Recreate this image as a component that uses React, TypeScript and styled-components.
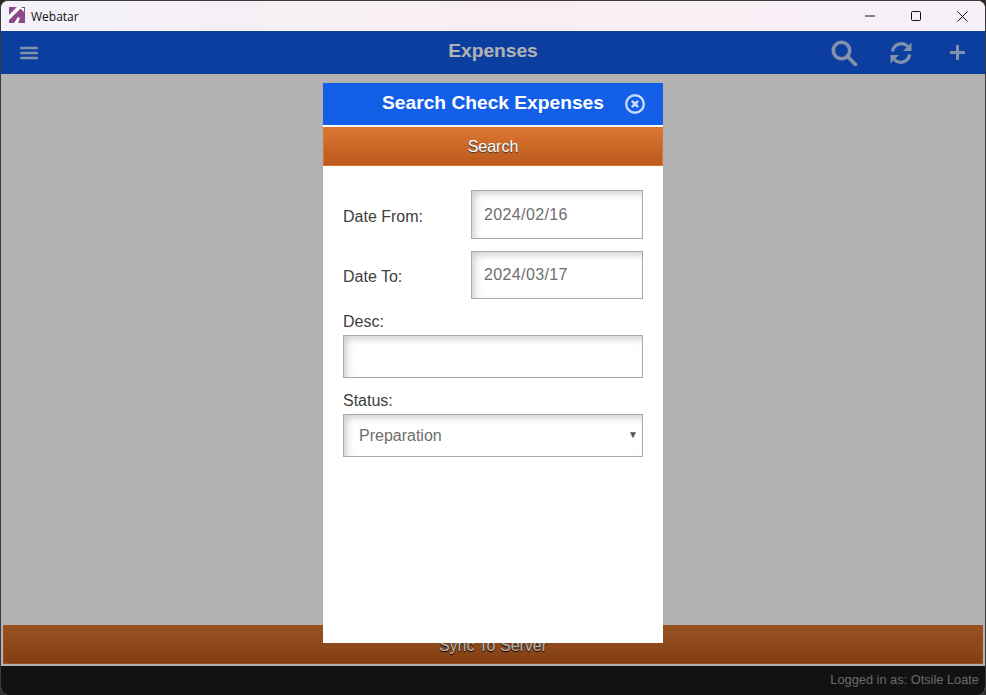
import { createGlobalStyle, styled } from "styled-components";

const Global = createGlobalStyle`
  html, body { margin: 0; padding: 0; height: 100%; background: #2b2b2b; overflow: hidden; }
  #root { height: 100%; }
  * { box-sizing: border-box; }
`;

const Win = styled.div`
  position: relative;
  display: flex;
  flex-direction: column;
  width: 986px;
  height: 695px;
  border: 1px solid #3a3a3a;
  border-bottom: 0;
  border-radius: 8px;
  overflow: hidden;
  background: #fff;
  font-family: "Liberation Sans", Arial, sans-serif;
`;

const TitleBar = styled.div`
  display: flex;
  align-items: center;
  height: 30px;
  flex: none;
  padding-left: 8px;
  background: linear-gradient(90deg, #f3f1f9 0%, #f9eff2 50%, #f8f0f9 100%);
`;

const LogoMark = styled.svg`
  display: block;
  margin-bottom: 2px;
`;

const AppTitle = styled.span`
  margin-left: 6px;
  font-family: "Open Sans", "Liberation Sans", sans-serif;
  font-size: 12px;
  color: #111;
`;

const WinButtons = styled.div`
  display: flex;
  margin-left: auto;
`;

const WinButton = styled.div`
  display: flex;
  align-items: center;
  justify-content: center;
  width: 46px;
  height: 30px;
`;

const TopBar = styled.header`
  position: relative;
  display: flex;
  align-items: center;
  justify-content: space-between;
  flex: none;
  height: 43px;
  padding: 0 20px 0 19px;
  background: #115ae3;
`;

const TopTitle = styled.h1`
  position: absolute;
  top: 9px;
  left: 0;
  right: 0;
  margin: 0;
  text-align: center;
  font-size: 19.2px;
  line-height: 22px;
  font-weight: 700;
  color: #fff;
`;

const TopActions = styled.div`
  position: relative;
  display: flex;
  align-items: center;
  gap: 31px;
`;

const TopIcon = styled.svg<{ $gapLeft?: number }>`
  display: block;
  margin-left: ${(p) => p.$gapLeft ?? 0}px;
  opacity: 0.72;
`;

const Content = styled.main`
  display: flex;
  flex-direction: column;
  justify-content: flex-end;
  flex: 1;
  padding: 0 2px 2px;
`;

const SyncButton = styled.button`
  display: block;
  width: 100%;
  height: 39px;
  padding: 2px 0 0;
  border: 1px solid #e0722f;
  background: linear-gradient(#dc7634, #bb5a1c);
  color: #fff;
  font-family: inherit;
  font-size: 16px;
  text-shadow: 0 1px 1px #000;
`;

const Footer = styled.footer`
  flex: none;
  height: 29px;
  padding: 6px 6px 0 0;
  background: #1a1a1a;
  color: #999;
  text-align: right;
  font-size: 12.8px;
  line-height: 15px;
`;

const Overlay = styled.div`
  position: absolute;
  inset: 30px 0 0 0;
  background: rgba(0, 0, 0, 0.3);
`;

const Modal = styled.section`
  position: absolute;
  top: 82px;
  left: 322px;
  display: flex;
  flex-direction: column;
  width: 340px;
  height: 560px;
  background: #fff;
`;

const ModalHeader = styled.div`
  position: relative;
  flex: none;
  height: 42px;
  padding-top: 9px;
  background: #135fe8;
  color: #fff;
  text-align: center;
  font-size: 19.2px;
  font-weight: 700;
  line-height: 22px;
`;

const CloseIcon = styled.svg`
  position: absolute;
  top: 10px;
  right: 17px;
`;

const SearchButton = styled.button`
  flex: none;
  height: 39px;
  margin-top: 2px;
  border: 1px solid #e0722f;
  background: linear-gradient(#dc7634, #bb5a1c);
  color: #fff;
  font-family: inherit;
  font-size: 16px;
  text-shadow: 0 1px 1px #333;
`;

const Form = styled.div`
  display: flex;
  flex-direction: column;
  padding: 24px 20px 0;
`;

const DateRow = styled.div`
  display: flex;
  align-items: center;
  justify-content: space-between;
  margin-bottom: 12px;
`;

const Label = styled.label<{ $stacked?: boolean }>`
  display: block;
  margin-bottom: ${(p) => (p.$stacked ? "3px" : "0")};
  padding-top: ${(p) => (p.$stacked ? "1px" : "5px")};
  color: #404040;
  font-size: 16px;
  line-height: ${(p) => (p.$stacked ? "20px" : "18px")};
`;

const fieldStyle = `
  border: 1px solid #aaa;
  border-radius: 0;
  background: #fff;
  box-shadow: inset 4px 4px 8px -2px rgba(0, 0, 0, 0.22);
  color: #6e6e6e;
  font-family: inherit;
  font-size: 16px;
  outline: none;
`;

const DateInput = styled.input`
  ${fieldStyle}
  width: 172px;
  height: 48.5px;
  padding: 1px 12px 0;
  letter-spacing: 0.38px;
`;

const TextInput = styled.input`
  ${fieldStyle}
  width: 300px;
  height: 43px;
  margin-bottom: 12px;
  padding: 0 12px;
`;

const SelectBox = styled.div`
  ${fieldStyle}
  position: relative;
  width: 300px;
  height: 43px;
  padding-left: 15px;
  line-height: 41px;
`;

const Caret = styled.span`
  position: absolute;
  top: -1px;
  right: 4px;
  color: #555;
  font-size: 10px;
`;

function Logo() {
  return (
    <LogoMark width="16" height="16" viewBox="0 0 16 16">
      <rect width="16" height="16" fill="#8a4a8c" />
      <path d="M8 0h5L0 13V8zM11 1h4v4zM5 16l4-6 2 1-2 5z" fill="#fff" />
    </LogoMark>
  );
}

function MinimizeIcon() {
  return (
    <svg width="10" height="10" viewBox="0 0 10 10">
      <path d="M0 5h10" stroke="#111" strokeWidth="1" />
    </svg>
  );
}

function MaximizeIcon() {
  return (
    <svg width="10" height="10" viewBox="0 0 10 10">
      <rect x="0.5" y="0.5" width="9" height="9" rx="1" fill="none" stroke="#111" />
    </svg>
  );
}

function WinCloseIcon() {
  return (
    <svg width="11" height="11" viewBox="0 0 11 11">
      <path d="M0.5 0.5l10 10M10.5 0.5l-10 10" stroke="#111" strokeWidth="1" />
    </svg>
  );
}

export default function App() {
  return (
    <>
      <Global />
      <Win>
        <TitleBar>
          <Logo />
          <AppTitle>Webatar</AppTitle>
          <WinButtons>
            <WinButton><MinimizeIcon /></WinButton>
            <WinButton><MaximizeIcon /></WinButton>
            <WinButton><WinCloseIcon /></WinButton>
          </WinButtons>
        </TitleBar>
        <TopBar>
          <TopIcon width="18" height="14" viewBox="0 0 18 14">
            <path d="M1.2 2h15.6M1.2 7h15.6M1.2 12h15.6" stroke="#fff" strokeWidth="2.6" strokeLinecap="round" />
          </TopIcon>
          <TopTitle>Expenses</TopTitle>
          <TopActions>
            <TopIcon width="27" height="26" viewBox="0 0 27 26">
              <circle cx="10.5" cy="10.5" r="8.2" fill="none" stroke="#fff" strokeWidth="3.6" />
              <path d="M16.5 16.5l8 8" stroke="#fff" strokeWidth="3.8" strokeLinecap="round" />
            </TopIcon>
            <TopIcon width="24" height="24" viewBox="0 0 24 24">
              <path d="M3.5 10.5A8.8 8.8 0 0 1 18.6 5.4" fill="none" stroke="#fff" strokeWidth="3.2" />
              <path d="M22.5 1.5v8.5H14z" fill="#fff" />
              <path d="M20.5 13.5A8.8 8.8 0 0 1 5.4 18.6" fill="none" stroke="#fff" strokeWidth="3.2" />
              <path d="M1.5 22.5V14H10z" fill="#fff" />
            </TopIcon>
            <TopIcon width="15" height="15" viewBox="0 0 15 15" $gapLeft={6}>
              <path d="M7.5 1v13M1 7.5h13" stroke="#fff" strokeWidth="3" strokeLinecap="round" />
            </TopIcon>
          </TopActions>
        </TopBar>
        <Content>
          <SyncButton>Sync To Server</SyncButton>
        </Content>
        <Footer>Logged in as: Otsile Loate</Footer>
        <Overlay />
        <Modal>
          <ModalHeader>
            Search Check Expenses
            <CloseIcon width="22" height="22" viewBox="0 0 22 22">
              <circle cx="11" cy="11" r="8.8" fill="none" stroke="#c9d9f9" strokeWidth="2.4" />
              <path d="M8.6 8.6l4.8 4.8M13.4 8.6l-4.8 4.8" stroke="#c9d9f9" strokeWidth="2.6" strokeLinecap="round" />
            </CloseIcon>
          </ModalHeader>
          <SearchButton>Search</SearchButton>
          <Form>
            <DateRow>
              <Label>Date From:</Label>
              <DateInput defaultValue="2024/02/16" />
            </DateRow>
            <DateRow>
              <Label>Date To:</Label>
              <DateInput defaultValue="2024/03/17" />
            </DateRow>
            <Label $stacked>Desc:</Label>
            <TextInput />
            <Label $stacked>Status:</Label>
            <SelectBox>
              Preparation
              <Caret>▼</Caret>
            </SelectBox>
          </Form>
        </Modal>
      </Win>
    </>
  );
}
